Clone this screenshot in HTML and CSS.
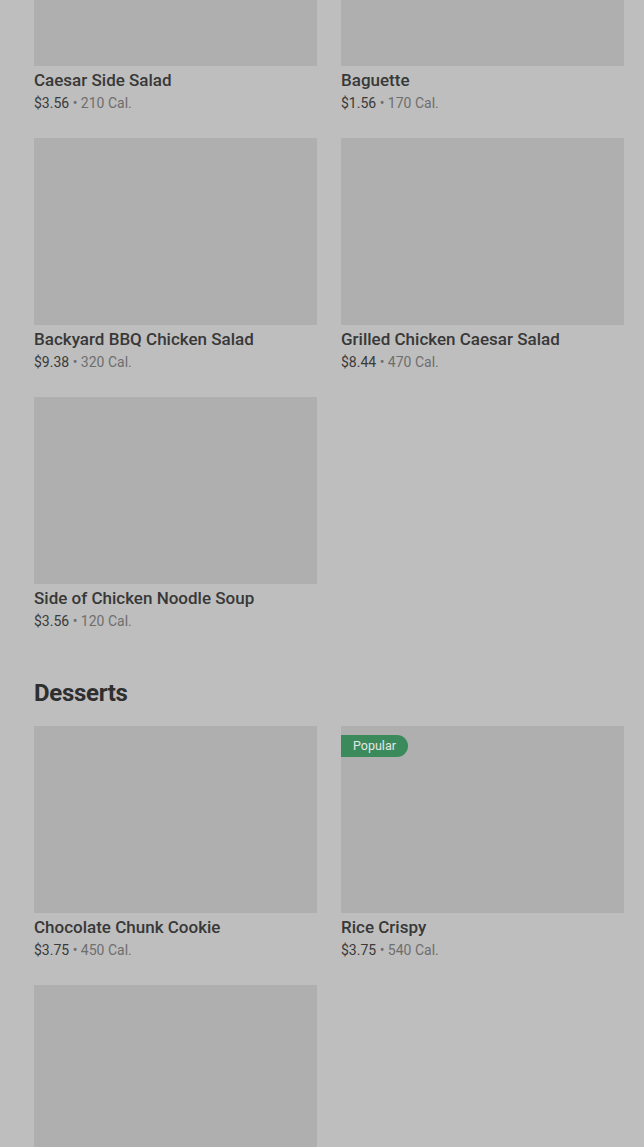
FILE: index.html
```html
<!DOCTYPE html>
<html lang="en">
<head>
    <meta charset="UTF-8">
    <meta name="viewport" content="width=device-width, initial-scale=1.0">
    <title>Menu</title>
    <link rel="stylesheet" href="styles.css">
</head>
<body>
    <div class="menu">
        <section class="section">
            <div class="item-grid">
                <div class="item">
                    <div class="item-image"></div>
                    <div class="item-name">Caesar Side Salad</div>
                    <div class="item-meta"><span class="price">$3.56</span> • <span class="cal">210 Cal.</span></div>
                </div>
                <div class="item">
                    <div class="item-image"></div>
                    <div class="item-name">Baguette</div>
                    <div class="item-meta"><span class="price">$1.56</span> • <span class="cal">170 Cal.</span></div>
                </div>
                <div class="item">
                    <div class="item-image"></div>
                    <div class="item-name">Backyard BBQ Chicken Salad</div>
                    <div class="item-meta"><span class="price">$9.38</span> • <span class="cal">320 Cal.</span></div>
                </div>
                <div class="item">
                    <div class="item-image"></div>
                    <div class="item-name">Grilled Chicken Caesar Salad</div>
                    <div class="item-meta"><span class="price">$8.44</span> • <span class="cal">470 Cal.</span></div>
                </div>
                <div class="item">
                    <div class="item-image"></div>
                    <div class="item-name">Side of Chicken Noodle Soup</div>
                    <div class="item-meta"><span class="price">$3.56</span> • <span class="cal">120 Cal.</span></div>
                </div>
            </div>
        </section>

        <section class="section">
            <h2 class="section-title">Desserts</h2>
            <div class="item-grid">
                <div class="item">
                    <div class="item-image"></div>
                    <div class="item-name">Chocolate Chunk Cookie</div>
                    <div class="item-meta"><span class="price">$3.75</span> • <span class="cal">450 Cal.</span></div>
                </div>
                <div class="item">
                    <div class="item-image">
                        <span class="badge">Popular</span>
                    </div>
                    <div class="item-name">Rice Crispy</div>
                    <div class="item-meta"><span class="price">$3.75</span> • <span class="cal">540 Cal.</span></div>
                </div>
                <div class="item">
                    <div class="item-image"></div>
                </div>
            </div>
        </section>
    </div>
</body>
</html>
```

FILE: styles.css
```css
* {
    margin: 0;
    padding: 0;
    box-sizing: border-box;
    font-family: Roboto, "Liberation Sans", sans-serif;
}

body {
    background-color: #bebebe;
    overflow: hidden;
}

/* page is scrolled down a little */
.menu {
    margin-top: -121px;
    padding: 0 20px 0 34px;
}

.section {
    margin-bottom: 47px;
}

.section-title {
    color: #2f2f2f;
    font-size: 24px;
    font-weight: 700;
    line-height: 30px;
    letter-spacing: -0.3px;
    margin-bottom: 18px;
}

.item-grid {
    display: grid;
    grid-template-columns: 1fr 1fr;
    column-gap: 24px;
    row-gap: 25px;
}

.item-image {
    position: relative;
    height: 187px;
    background-color: #afafaf;
}

.item-name {
    margin-top: 3px;
    color: #383838;
    font-size: 17px;
    font-weight: 500;
    line-height: 22px;
}

.item-meta {
    margin-top: 2px;
    color: #6e6e6e;
    font-size: 14px;
    line-height: 20px;
}

.price {
    color: #3a3a3a;
}

.cal {
    color: #6e6e6e;
}

.badge {
    position: absolute;
    top: 9px;
    left: 0;
    height: 22px;
    padding: 0 12px;
    background-color: #3b8a5b;
    color: #e6e6e6;
    font-size: 12.5px;
    line-height: 22px;
    border-radius: 0 11px 11px 0;
}
```
